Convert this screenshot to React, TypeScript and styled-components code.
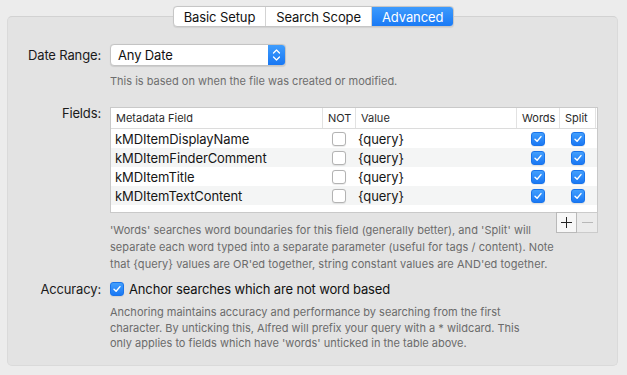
import { FC } from 'react';
import styled, { createGlobalStyle } from 'styled-components';

const GlobalStyle = createGlobalStyle`
  html, body {
    margin: 0;
    padding: 0;
    background: #ececec;
  }
  body {
    font-family: Inter, 'Noto Sans', 'Liberation Sans', sans-serif;
    -webkit-font-smoothing: antialiased;
  }
`;

interface IField {
  name: string;
  not: boolean;
  value: string;
  words: boolean;
  split: boolean;
}

const FIELDS: IField[] = [
  { name: 'kMDItemDisplayName', not: false, value: '{query}', words: true, split: true },
  { name: 'kMDItemFinderComment', not: false, value: '{query}', words: true, split: true },
  { name: 'kMDItemTitle', not: false, value: '{query}', words: true, split: true },
  { name: 'kMDItemTextContent', not: false, value: '{query}', words: true, split: true },
];

const TABS = ['Basic Setup', 'Search Scope', 'Advanced'];

const Check: FC<{ checked: boolean }> = ({ checked }) => (
  <SCheck checked={checked}>
    {checked && (
      <svg width='10' height='10' viewBox='0 0 10 10'>
        <path d='M2 5.2 L4.1 7.3 L8 2.6' fill='none' stroke='#fff' strokeWidth='1.4' strokeLinecap='round' strokeLinejoin='round' />
      </svg>
    )}
  </SCheck>
);

export default function App() {
  return (
    <SWindow>
      <GlobalStyle />
      <STabs>
        {TABS.map((t) => (
          <STab key={t} active={t === 'Advanced'}>
            {t}
          </STab>
        ))}
      </STabs>
      <SPanel>
        <SForm>
          <SLabel>Date Range:</SLabel>
          <SPopup>
            <span>Any Date</span>
            <SStepper>
              <svg width='9' height='14' viewBox='0 0 9 14'>
                <path d='M1.5 5 L4.5 2 L7.5 5 M1.5 9 L4.5 12 L7.5 9' fill='none' stroke='#fff' strokeWidth='1.3' strokeLinecap='round' strokeLinejoin='round' />
              </svg>
            </SStepper>
          </SPopup>
          <span />
          <SHelp>This is based on when the file was created or modified.</SHelp>

          <SLabel shift={-5}>Fields:</SLabel>
          <div>
            <STable>
              <SHeadRow>
                <SHeadCell>Metadata Field</SHeadCell>
                <SHeadCell>NOT</SHeadCell>
                <SHeadCell>Value</SHeadCell>
                <SHeadCell>Words</SHeadCell>
                <SHeadCell>Split</SHeadCell>
              </SHeadRow>
              {FIELDS.map((f, i) => (
                <SRow key={f.name} striped={i % 2 === 1}>
                  <SCell>{f.name}</SCell>
                  <SCheckCell>
                    <Check checked={f.not} />
                  </SCheckCell>
                  <SCell pad={3}>{f.value}</SCell>
                  <SCheckCell>
                    <Check checked={f.words} />
                  </SCheckCell>
                  <SCheckCell>
                    <Check checked={f.split} />
                  </SCheckCell>
                </SRow>
              ))}
              <STableFill />
            </STable>
            <SUnder>
              <SNote>
                'Words' searches word boundaries for this field (generally better), and 'Split' will
                <br />
                separate each word typed into a separate parameter (useful for tags / content). Note
                <br />
                that {'{query}'} values are OR'ed together, string constant values are AND'ed together.
              </SNote>
              <SButtons>
                <SSmallButton>
                  <svg width='11' height='11' viewBox='0 0 11 11'>
                    <path d='M5.5 0 V11 M0 5.5 H11' stroke='#222' strokeWidth='1' />
                  </svg>
                </SSmallButton>
                <SSmallButton disabled>
                  <svg width='11' height='11' viewBox='0 0 11 11'>
                    <path d='M0 5.5 H11' stroke='#b8b8b8' strokeWidth='1' />
                  </svg>
                </SSmallButton>
              </SButtons>
            </SUnder>
          </div>

          <SLabel shift={5}>Accuracy:</SLabel>
          <SOption>
            <Check checked />
            <span>Anchor searches which are not word based</span>
          </SOption>
          <span />
          <SAccNote>
            Anchoring maintains accuracy and performance by searching from the first
            <br />
            character. By unticking this, Alfred will prefix your query with a * wildcard. This
            <br />
            only applies to fields which have 'words' unticked in the table above.
          </SAccNote>
        </SForm>
      </SPanel>
    </SWindow>
  );
}

const COLS = '211px 33px 161px 43px 37px 1fr';

const SWindow = styled.div`
  width: 627px;
  height: 375px;
  padding-top: 6px;
  box-sizing: border-box;
  background: #ececec;
  overflow: hidden;
`;

const STabs = styled.div`
  position: relative;
  z-index: 1;
  display: flex;
  width: fit-content;
  margin: 0 auto -11px;
  height: 21px;
  border: 1px solid #c6c6c6;
  border-radius: 4px;
  background: #fff;
  box-sizing: border-box;
  overflow: hidden;
  box-shadow: 0 0.5px 1px rgba(0, 0, 0, 0.08);
`;

const STab = styled.div<{ active?: boolean }>`
  display: flex;
  align-items: center;
  padding: 0 10px;
  font-size: 13px;
  letter-spacing: -0.1px;
  color: ${(p) => (p.active ? '#fff' : '#111')};
  background: ${(p) => (p.active ? 'linear-gradient(#3d9bfd, #1a7af5)' : 'transparent')};
  & + & {
    border-left: 1px solid #d3d3d3;
  }
`;

const SPanel = styled.div`
  margin: 0 9px 0 7px;
  height: 350px;
  box-sizing: border-box;
  background: #e3e3e3;
  border: 1px solid #dadada;
  border-top-color: #d2d2d2;
  border-radius: 5px;
  padding: 27px 19px 0 0;
`;

const SForm = styled.div`
  display: grid;
  grid-template-columns: 93px 1fr;
  column-gap: 9px;
  align-items: start;
`;

const SLabel = styled.div<{ shift?: number }>`
  text-align: right;
  font-size: 13px;
  letter-spacing: -0.15px;
  line-height: 22px;
  color: #1a1a1a;
  margin-top: ${(p) => p.shift ?? 0}px;
`;

const SPopup = styled.div`
  display: flex;
  align-items: center;
  justify-content: space-between;
  width: 176px;
  height: 22px;
  box-sizing: border-box;
  border: 1px solid #c4c4c4;
  border-radius: 4px;
  background: #fff;
  overflow: hidden;
  font-size: 13px;
  letter-spacing: -0.15px;
  color: #111;
  padding-left: 7px;
  box-shadow: 0 0.5px 1px rgba(0, 0, 0, 0.1);
`;

const SStepper = styled.div`
  display: flex;
  align-items: center;
  justify-content: center;
  width: 17px;
  height: 100%;
  background: linear-gradient(#3f9dfd, #1877f3);
`;

const SHelp = styled.div`
  margin: 8px 0 19px;
  font-size: 11px;
  line-height: 14px;
  color: #6e6e6e;
`;

const STable = styled.div`
  display: flex;
  flex-direction: column;
  height: 106px;
  box-sizing: border-box;
  border: 1px solid #c9c9c9;
  background: #fff;
`;

const SHeadRow = styled.div`
  display: grid;
  grid-template-columns: ${COLS};
  height: 21px;
  border-bottom: 1px solid #dcdcdc;
  box-sizing: border-box;
`;

const SHeadCell = styled.div`
  display: flex;
  align-items: center;
  padding-left: 5px;
  font-size: 11px;
  color: #2a2a2a;
  & + & {
    border-left: 1px solid #e2e2e2;
  }
  &:nth-child(5) {
    border-right: 1px solid #e2e2e2;
  }
`;

const SRow = styled.div<{ striped?: boolean }>`
  display: grid;
  grid-template-columns: ${COLS};
  height: 19px;
  background: ${(p) => (p.striped ? '#f4f5f5' : '#fff')};
`;

const SCell = styled.div<{ pad?: number }>`
  display: flex;
  align-items: center;
  padding-left: ${(p) => p.pad ?? 4}px;
  font-size: 13px;
  letter-spacing: -0.1px;
  color: #161616;
  white-space: nowrap;
`;

const SCheckCell = styled.div`
  display: flex;
  align-items: center;
  justify-content: center;
`;

const SCheck = styled.div<{ checked: boolean }>`
  display: flex;
  align-items: center;
  justify-content: center;
  width: 14px;
  height: 14px;
  box-sizing: border-box;
  border-radius: 3px;
  flex-shrink: 0;
  background: ${(p) => (p.checked ? 'linear-gradient(#429ffd, #1a78f4)' : '#fff')};
  border: 1px solid ${(p) => (p.checked ? '#1a74ea' : '#b3b3b3')};
  box-shadow: 0 0.5px 1px rgba(0, 0, 0, 0.08);
`;

const STableFill = styled.div`
  flex: 1;
`;

const SUnder = styled.div`
  display: flex;
  align-items: flex-start;
  justify-content: space-between;
`;

const SNote = styled.div`
  margin-top: 9px;
  font-size: 11px;
  line-height: 17px;
  letter-spacing: 0.05px;
  color: #6b6b6b;
  white-space: nowrap;
`;

const SButtons = styled.div`
  display: flex;
  margin-top: -1px;
`;

const SSmallButton = styled.div<{ disabled?: boolean }>`
  display: flex;
  align-items: center;
  justify-content: center;
  width: 21px;
  height: 21px;
  box-sizing: border-box;
  border: 1px solid #b9b9b9;
  background: ${(p) => (p.disabled ? '#ebebeb' : '#f7f7f7')};
  & + & {
    border-left: none;
    border-color: #cbcbcb;
  }
`;

const SOption = styled.div`
  display: flex;
  align-items: center;
  gap: 5px;
  height: 22px;
  margin-top: 5px;
  font-size: 13px;
  letter-spacing: -0.15px;
  color: #111;
`;

const SAccNote = styled.div`
  margin-top: 5px;
  font-size: 11px;
  line-height: 15.5px;
  color: #6b6b6b;
  white-space: nowrap;
`;
